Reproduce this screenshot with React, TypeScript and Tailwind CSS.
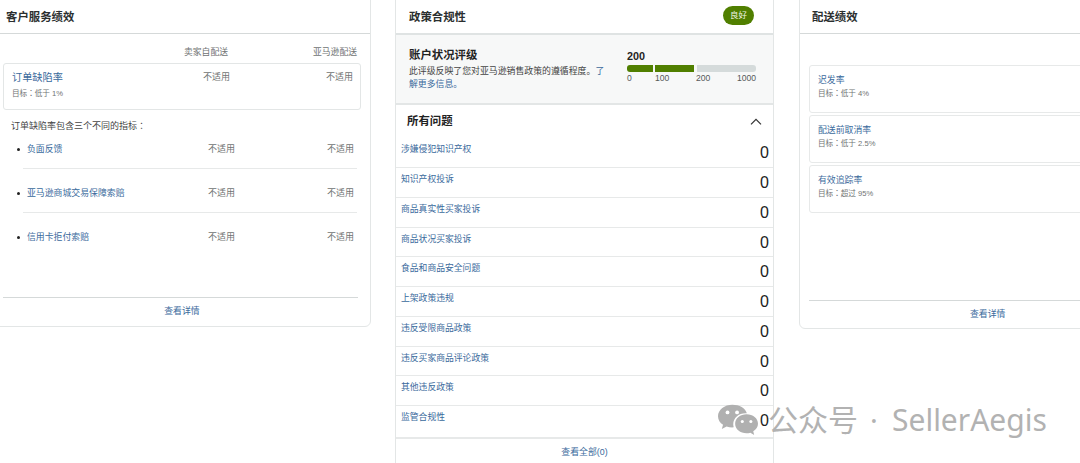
function NA({ className = "" }: { className?: string }) {
  return <span className={`text-[9px] leading-[12px] text-[#6f7373] ${className}`}>不适用</span>;
}

function Colon() {
  return <span className="font-['Noto_Sans_CJK_TC']">：</span>;
}

function Bullet({ label, line }: { label: string; line: boolean }) {
  return (
    <div className={`mb-[17px] ml-[22px] mr-[13px] h-[27px] pt-[1px] ${line ? "border-b border-[#e7e9e9]" : ""}`}>
      <div className="flex items-start">
        <span className="ml-[-6px] mr-[7.500px] mt-[5px] h-[2.500px] w-[2.500px] shrink-0 rounded-full bg-[#222]" />
        <a className="w-[181px] shrink-0 text-[8.9px] leading-[12px] text-[#3a6a9c]">{label}</a>
        <NA className="w-[119px] shrink-0" />
        <NA className="shrink-0" />
      </div>
    </div>
  );
}

function Target({ name, rule }: { name: string; rule: string }) {
  return (
    <div className="h-[48px] rounded-[3px] border border-[#e7e9e9] pl-[8px] pt-[7.500px]">
      <a className="block text-[8.9px] leading-[13px] text-[#3a6a9c]">{name}</a>
      <div className="mt-[-0.500px] text-[7.6px] leading-[13px] text-[#6f7373]">
        目标<Colon />{rule}
      </div>
    </div>
  );
}

const issues = [
  "涉嫌侵犯知识产权",
  "知识产权投诉",
  "商品真实性买家投诉",
  "商品状况买家投诉",
  "食品和商品安全问题",
  "上架政策违规",
  "违反受限商品政策",
  "违反买家商品评论政策",
  "其他违反政策",
  "监管合规性",
];

function WeChat() {
  return (
    <svg width="40" height="34" viewBox="0 0 42 34" className="shrink-0">
      <path d="M15 1C7 1 0 6.200 0 13c0 3.800 2.100 6.900 5.300 9.100L4 26.500l5-2.600c1.900.6 4 .9 6 .9.500 0 1 0 1.500-.1-.3-1.100-.5-2.100-.5-3.200 0-6.400 5.600-11.500 13-11.500h1.300C28.800 4.600 22.500 1 15 1z" fill="#b0b0b0" />
      <path d="M42 21c0-5.700-5.400-10-12-10s-12 4.300-12 10 5.400 10 12 10c1.300 0 2.700-.2 4-.6l4 2.300-1-3.800c3-2 5-4.700 5-7.900z" fill="#b0b0b0" />
      <circle cx="10" cy="9" r="2" fill="#fff" />
      <circle cx="20" cy="9" r="2" fill="#fff" />
      <circle cx="25.500" cy="18.500" r="1.600" fill="#fff" />
      <circle cx="34.500" cy="18.500" r="1.600" fill="#fff" />
    </svg>
  );
}

export default function App() {
  return (
    <div
      className="relative h-[463px] w-[1080px] overflow-hidden bg-white"
      style={{ fontFamily: '"Liberation Sans", "Noto Sans CJK SC", sans-serif' }}
    >
      <div className="flex items-start">
        {/* Left card */}
        <section className="ml-[-10px] mt-[-10px] flex h-[337px] w-[381px] shrink-0 flex-col rounded-[6px] border border-[#e3e6e6] bg-white">
          <div className="flex h-[43px] shrink-0 items-end border-b border-[#d5d9d9] pb-[8px] pl-[15px]">
            <h2 className="text-[11.4px] font-bold leading-[16px] text-[#2b2f2f]">客户服务绩效</h2>
          </div>
          <div className="flex pt-[12px] text-[8.8px] leading-[12px] text-[#6f7373]">
            <span className="ml-[193px] w-[129px]">卖家自配送</span>
            <span>亚马逊配送</span>
          </div>
          <div className="ml-[12px] mr-[9px] mt-[5px] flex h-[47px] rounded-[3px] border border-[#e3e6e6] pl-[8px] pt-[7px]">
            <div className="w-[191px]">
              <a className="block text-[10.2px] leading-[14px] text-[#3a6a9c]">订单缺陷率</a>
              <div className="mt-[2px] text-[7.6px] leading-[11px] text-[#6f7373]">
                目标<Colon />低于 1%
              </div>
            </div>
            <NA className="w-[123px]" />
            <NA />
          </div>
          <p className="ml-[20px] mt-[10px] text-[9px] leading-[12px] text-[#444]">
            订单缺陷率包含三个不同的指标<Colon />
          </p>
          <div className="ml-[10px] mt-[10px]">
            <Bullet label="负面反馈" line />
            <Bullet label="亚马逊商城交易保障索赔" line />
            <Bullet label="信用卡拒付索赔" line={false} />
          </div>
          <div className="mx-[12px] mt-auto h-[29px] border-t border-[#d5d9d9] pt-[7px] text-center text-[8.9px] leading-[12px] text-[#3a6a9c]">
            <a className="ml-[3px]">查看详情</a>
          </div>
        </section>

        {/* Middle card */}
        <section className="ml-[24px] mt-[-10px] h-[490px] w-[379px] shrink-0 rounded-[6px] border border-[#e3e6e6] bg-white">
          <div className="flex h-[44px] items-end justify-between border-b-2 border-[#dfe3e3] pb-[8px] pl-[13px] pr-[19px]">
            <h2 className="text-[11.4px] font-bold leading-[16px] text-[#2b2f2f]">政策合规性</h2>
            <span className="flex h-[19px] w-[31px] items-center justify-center rounded-full bg-[#507f00] text-[8.5px] text-[#eef3e4]">良好</span>
          </div>
          <div className="flex h-[70px] border-b-2 border-[#e3e6e6] bg-[#f7f8f8] pl-[13px] pt-[12px]">
            <div className="w-[200px] shrink-0">
              <h3 className="text-[11.4px] font-bold leading-[16px] text-[#1f2323]">账户状况评级</h3>
              <p className="mt-[2px] text-[8.9px] leading-[13px] text-[#444]">
                此评级反映了您对亚马逊销售政策的遵循程度。<a className="text-[#3a6a9c]">了解更多信息。</a>
              </p>
            </div>
            <div className="ml-[18px] w-[129px] shrink-0 pt-[3px]">
              <div className="text-[10.8px] font-bold leading-[12px] text-[#1f2323]">200</div>
              <div className="mt-[3px] flex h-[6.500px] gap-[2.500px]">
                <div className="w-[25.500px] rounded-l-[3px] bg-[#507f00]" />
                <div className="w-[39px] bg-[#507f00]" />
                <div className="flex-1 rounded-r-[3px] bg-[#d5dbdb]" />
              </div>
              <div className="mt-[0.500px] flex h-[12px] text-[8.6px] leading-[12px] text-[#565959]">
                <span className="w-[28px]">0</span>
                <span className="w-[41px]">100</span>
                <span className="flex-1">200</span>
                <span>1000</span>
              </div>
            </div>
          </div>
          <div className="flex h-[32px] items-center justify-between pl-[11px] pr-[11px]">
            <h3 className="text-[11.4px] font-bold leading-[16px] text-[#1f2323]">所有问题</h3>
            <svg width="12" height="7" viewBox="0 0 12 7" fill="none" stroke="#333" strokeWidth="1.2">
              <path d="M1 6.300 6 1.300l5 5" />
            </svg>
          </div>
          <div>
            {issues.map((t, i) => (
              <div
                key={t}
                className={`flex items-start justify-between border-[#e7e9e9] pl-[5px] pr-[4px] ${i === 0 ? "h-[31px] border-b pt-[1px]" : i === 9 ? "h-[33px] border-b-2" : "h-[29.750px] border-b"}`}
              >
                <a className="mt-[5px] text-[8.8px] leading-[12px] text-[#3a6a9c]">{t}</a>
                <span className="mt-[6px] text-[16px] leading-[17px] text-[#222]">0</span>
              </div>
            ))}
          </div>
          <div className="pt-[7px] text-center text-[8.9px] leading-[12px] text-[#3a6a9c]">查看全部(0)</div>
        </section>

        {/* Right card */}
        <section className="ml-[25px] mt-[-10px] flex h-[339px] w-[400px] shrink-0 flex-col rounded-[6px] border border-[#e3e6e6] bg-white">
          <div className="flex h-[43px] shrink-0 items-end border-b border-[#d5d9d9] pb-[8px] pl-[12px]">
            <h2 className="text-[11.4px] font-bold leading-[16px] text-[#2b2f2f]">配送绩效</h2>
          </div>
          <div className="ml-[9px] mt-[31px] flex flex-col gap-[2px]">
            <Target name="迟发率" rule="低于 4%" />
            <Target name="配送前取消率" rule="低于 2.5%" />
            <Target name="有效追踪率" rule="超过 95%" />
          </div>
          <div className="ml-[9px] mt-auto h-[28px] border-t border-[#d5d9d9] pt-[7px] text-[8.9px] leading-[12px] text-[#3a6a9c]">
            <a className="ml-[161px]">查看详情</a>
          </div>
        </section>
      </div>

      {/* Watermark */}
      <div className="absolute left-[718px] top-[402px] flex items-center text-[#b2b2b2]" style={{ fontFamily: '"Noto Sans", "Noto Sans CJK SC", sans-serif' }}>
        <WeChat />
        <span className="ml-[10px] whitespace-nowrap text-[30px] leading-[36px]">公众号</span>
        <span className="ml-[12px] w-[22px] whitespace-nowrap text-[29px] leading-[36px]">·</span>
        <span className="whitespace-nowrap text-[30px] leading-[36px]">SellerAegis</span>
      </div>
    </div>
  );
}
